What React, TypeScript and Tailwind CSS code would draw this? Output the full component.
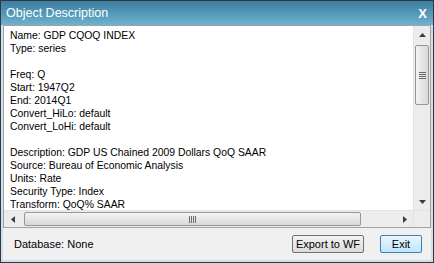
const lines = [
  'Name: GDP CQOQ INDEX',
  'Type: series',
  '',
  'Freq: Q',
  'Start: 1947Q2',
  'End: 2014Q1',
  'Convert_HiLo: default',
  'Convert_LoHi: default',
  '',
  'Description: GDP US Chained 2009 Dollars QoQ SAAR',
  'Source: Bureau of Economic Analysis',
  'Units: Rate',
  'Security Type: Index',
  'Transform: QoQ% SAAR',
]

function Arrow({ dir }: { dir: 'up' | 'down' | 'left' | 'right' }) {
  const pts = {
    up: '0,4 7,4 3.5,0',
    down: '0,0 7,0 3.5,4',
    left: '4,0 4,7 0,3.5',
    right: '0,0 0,7 4,3.5',
  }[dir]
  const vert = dir === 'up' || dir === 'down'
  return (
    <svg width={vert ? 7 : 4} height={vert ? 4 : 7} viewBox={vert ? '0 0 7 4' : '0 0 4 7'}>
      <polygon points={pts} fill="#3c3c3c" />
    </svg>
  )
}

function VScroll() {
  return (
    <div className="flex flex-col w-[17px] bg-[#ececec] border-l border-[#e3e3e3]">
      <div className="h-[17px] flex items-center justify-center">
        <Arrow dir="up" />
      </div>
      <div className="h-[2px]" />
      <div className="mx-[1px] h-[60px] rounded-[2px] border border-[#979797] bg-gradient-to-r from-[#f3f3f3] to-[#d8d8d8] flex items-center justify-center">
        <div className="flex flex-col gap-[1px]">
          <div className="w-[7px] h-[1px] bg-[#6b6b6b]" />
          <div className="w-[7px] h-[1px] bg-[#6b6b6b]" />
          <div className="w-[7px] h-[1px] bg-[#6b6b6b]" />
          <div className="w-[7px] h-[1px] bg-[#6b6b6b]" />
        </div>
      </div>
      <div className="flex-1" />
      <div className="h-[17px] flex items-center justify-center">
        <Arrow dir="down" />
      </div>
    </div>
  )
}

function HScroll() {
  return (
    <div className="flex h-[17px] bg-[#ececec] border-t border-[#e3e3e3]">
      <div className="w-[17px] flex items-center justify-center">
        <Arrow dir="left" />
      </div>
      <div className="w-[3px]" />
      <div className="my-[1px] w-[337px] rounded-[2px] border border-[#979797] bg-gradient-to-b from-[#f3f3f3] to-[#d8d8d8] flex items-center justify-center">
        <div className="flex gap-[1px]">
          <div className="w-[1px] h-[7px] bg-[#6b6b6b]" />
          <div className="w-[1px] h-[7px] bg-[#6b6b6b]" />
          <div className="w-[1px] h-[7px] bg-[#6b6b6b]" />
          <div className="w-[1px] h-[7px] bg-[#6b6b6b]" />
        </div>
      </div>
      <div className="flex-1" />
      <div className="w-[17px] flex items-center justify-center">
        <Arrow dir="right" />
      </div>
    </div>
  )
}

export default function App() {
  return (
    <div
      className="w-[434px] h-[263px] flex flex-col border border-[#2b3a46] bg-[#f0f0f0] overflow-hidden"
      style={{ fontFamily: '"Liberation Sans", Arial, sans-serif' }}
    >
      {/* Title bar */}
      <div className="h-[24px] shrink-0 flex items-center justify-between pl-[5px] pr-[6px] bg-gradient-to-b from-[#3b7ea0] to-[#6db2cf]">
        <span className="text-[12.5px] text-white leading-none">Object Description</span>
        <span className="text-[13px] font-bold text-white leading-none">X</span>
      </div>

      <div className="flex-1 flex flex-col border-x-2 border-b-2 border-[#cfe0ea]">
        {/* Text box */}
        <div className="h-[203px] flex flex-col border border-[#a3a3a3] bg-white">
          <div className="flex flex-1 min-h-0">
            <div className="flex-1 overflow-hidden pl-[6px] pt-[3px] text-[10.4px] leading-[13px] text-black whitespace-nowrap">
              {lines.map((l, i) => (
                <div key={i} className="h-[13px]">{l}</div>
              ))}
            </div>
            <VScroll />
          </div>
          <div className="flex">
            <div className="flex-1">
              <HScroll />
            </div>
            <div className="w-[17px] bg-[#ececec] border-t border-l border-[#e3e3e3]" />
          </div>
        </div>

        {/* Footer */}
        <div className="flex-1 flex items-center pl-[11px] pr-[9px] text-[11px] text-black">
          <span className="flex-1">Database: None</span>
          <button className="h-[18px] w-[72px] rounded-[2px] border border-[#707070] bg-gradient-to-b from-[#f2f2f2] to-[#dcdcdc] text-[11px] leading-none">
            Export to WF
          </button>
          <button className="ml-[16px] h-[18px] w-[42px] rounded-[2px] border border-[#3c7fb1] bg-gradient-to-b from-[#eaf6fd] to-[#bee6fd] text-[11px] leading-none">
            Exit
          </button>
        </div>
      </div>
    </div>
  )
}
